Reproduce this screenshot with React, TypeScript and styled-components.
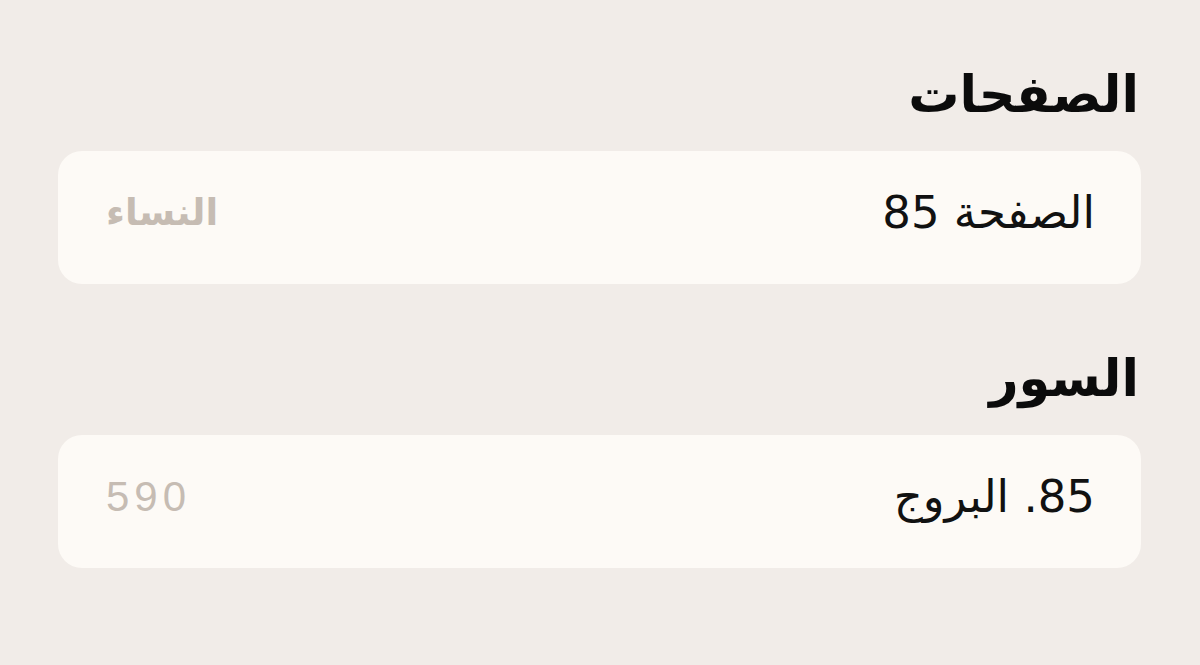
import React from "react";
import styled, { createGlobalStyle } from "styled-components";

const GlobalStyle = createGlobalStyle`
  html, body {
    margin: 0;
    padding: 0;
    background: #f1ece8;
  }
  body {
    font-family: "DejaVu Sans", "Liberation Sans", sans-serif;
  }
`;

const Page = styled.div`
  direction: rtl;
  box-sizing: border-box;
  width: 1200px;
  height: 665px;
  padding: 65px 59px 0 58px;
  display: flex;
  flex-direction: column;
`;

const Section = styled.section`
  display: flex;
  flex-direction: column;
  margin-bottom: 65px;
`;

const Heading = styled.h2`
  margin: 0 2px 26px 0;
  font-size: 51px;
  line-height: 60px;
  font-weight: 700;
  color: #0b0b0b;
`;

const Card = styled.div`
  box-sizing: border-box;
  height: 133px;
  background: #fdfaf6;
  border-radius: 24px;
  display: flex;
  align-items: center;
  justify-content: space-between;
  padding: 0 46px 10px 48px;
`;

const Primary = styled.span`
  font-family: "DejaVu Sans", "Liberation Sans", sans-serif;
  font-size: 45px;
  line-height: 60px;
  color: #111;
`;

const Secondary = styled.span<{ $num?: boolean }>`
  font-family: ${(p) => (p.$num ? '"Liberation Sans", sans-serif' : '"DejaVu Sans", sans-serif')};
  font-size: ${(p) => (p.$num ? "42px" : "37px")};
  letter-spacing: ${(p) => (p.$num ? "5px" : "0")};
  line-height: 60px;
  font-weight: ${(p) => (p.$num ? 400 : 700)};
  color: #c6bcb3;
`;

export default function App() {
  return (
    <>
      <GlobalStyle />
      <Page>
        <Section>
          <Heading>الصفحات</Heading>
          <Card>
            <Primary>الصفحة 85</Primary>
            <Secondary>النساء</Secondary>
          </Card>
        </Section>
        <Section>
          <Heading>السور</Heading>
          <Card>
            <Primary>85. البروج</Primary>
            <Secondary $num>590</Secondary>
          </Card>
        </Section>
      </Page>
    </>
  );
}
